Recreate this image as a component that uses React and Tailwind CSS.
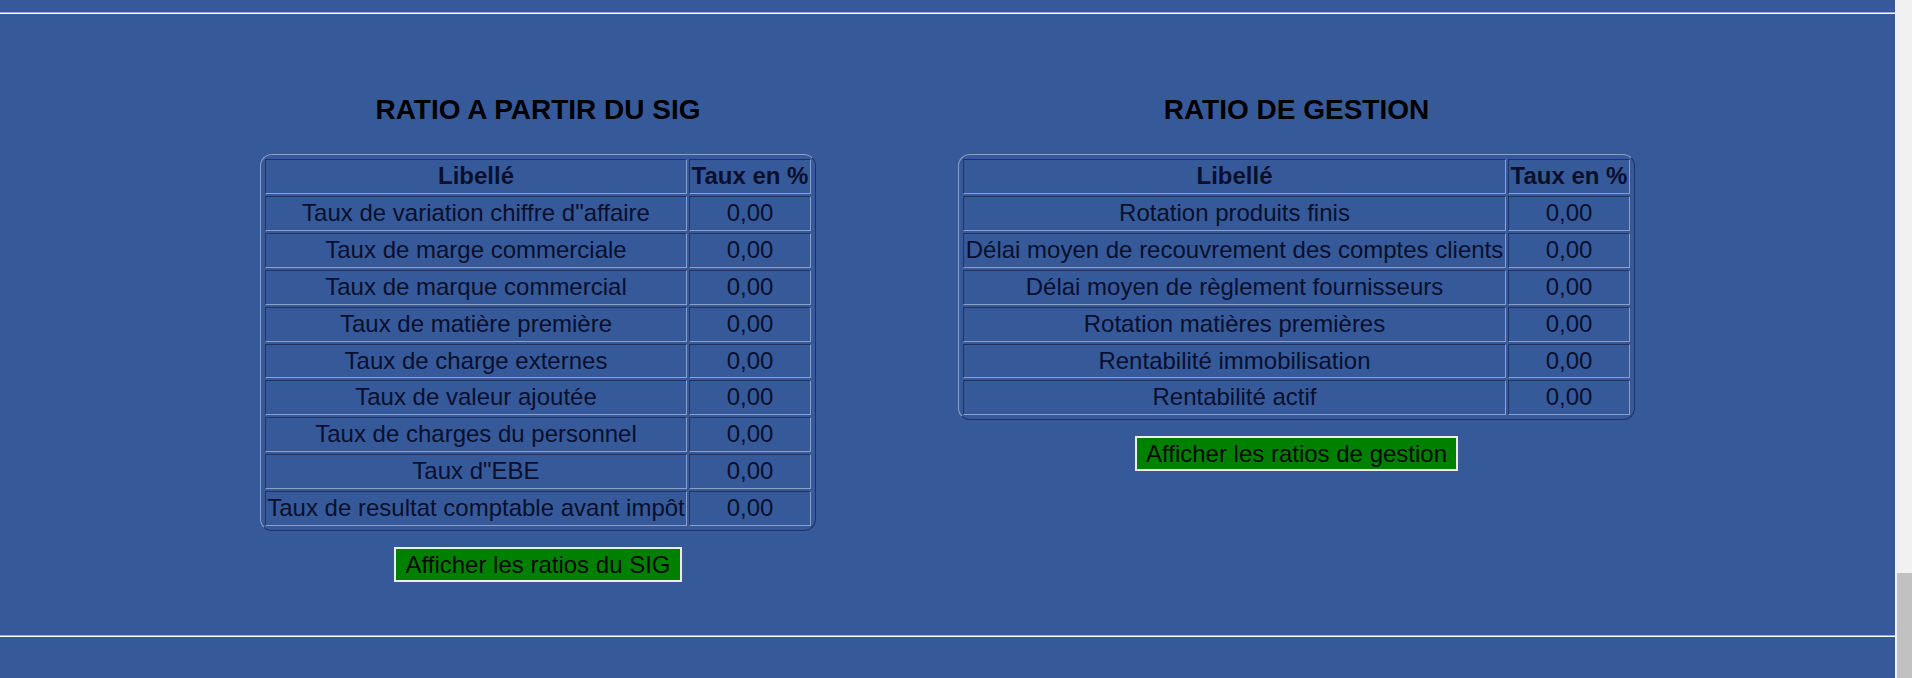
import React from 'react';

const sigRows = [
  'Taux de variation chiffre d"affaire',
  'Taux de marge commerciale',
  'Taux de marque commercial',
  'Taux de matière première',
  'Taux de charge externes',
  'Taux de valeur ajoutée',
  'Taux de charges du personnel',
  'Taux d"EBE',
  'Taux de resultat comptable avant impôt',
];

const gestionRows = [
  'Rotation produits finis',
  'Délai moyen de recouvrement des comptes clients',
  'Délai moyen de règlement fournisseurs',
  'Rotation matières premières',
  'Rentabilité immobilisation',
  'Rentabilité actif',
];

const cell = "border border-t-[#1f3263] border-l-[#1f3263] border-b-[#8c9fcb] border-r-[#8c9fcb] px-[1px] py-[2px] leading-[28.9px] text-center whitespace-nowrap";

function Hr() {
  return <div className="h-[1px] border-t border-t-[#9ba6dc] border-b border-b-white" />;
}

function RatioBlock({ title, rows, button, labelWidth }) {
  return (
    <div className="flex flex-col items-center">
      <h2 className="text-[28px] leading-[32px] font-bold text-black mb-[28px]">{title}</h2>
      <div className="rounded-[12px] border border-t-[#8c9fcb] border-l-[#8c9fcb] border-b-[#1f3263] border-r-[#1f3263] p-[2px]">
        <table className="border-separate border-spacing-[2px] text-[24px] text-[#0a0f2e]">
          <thead>
            <tr>
              <th className={cell} style={{ width: labelWidth }}>Libellé</th>
              <th className={cell + " w-[122px]"}>Taux en %</th>
            </tr>
          </thead>
          <tbody>
            {rows.map(r => (
              <tr key={r}>
                <td className={cell}>{r}</td>
                <td className={cell}>0,00</td>
              </tr>
            ))}
          </tbody>
        </table>
      </div>
      <button className="mt-[16px] bg-[#008000] border-2 border-[#ececec] px-[9px] py-[1.5px] text-[24px] leading-[27.6px] text-[#050a05]">
        {button}
      </button>
    </div>
  );
}

export default function App() {
  return (
    <div className="flex w-full h-[678px] overflow-hidden bg-[#365a99]" style={{ fontFamily: '"Liberation Sans", Arial, sans-serif' }}>
      <div className="flex-1 flex flex-col pt-[12px]">
        <Hr />
        <div className="h-[621px] flex justify-center items-start gap-[142px] pt-[80px]">
          <RatioBlock title="RATIO A PARTIR DU SIG" rows={sigRows} button="Afficher les ratios du SIG" labelWidth="422px" />
          <RatioBlock title="RATIO DE GESTION" rows={gestionRows} button="Afficher les ratios de gestion" labelWidth="543px" />
        </div>
        <Hr />
      </div>
      <div className="w-[17px] h-full bg-[#f1f1f1] flex flex-col justify-end">
        <div className="h-[105px] ml-[2px] bg-[#c1c1c1]" />
      </div>
    </div>
  );
}
